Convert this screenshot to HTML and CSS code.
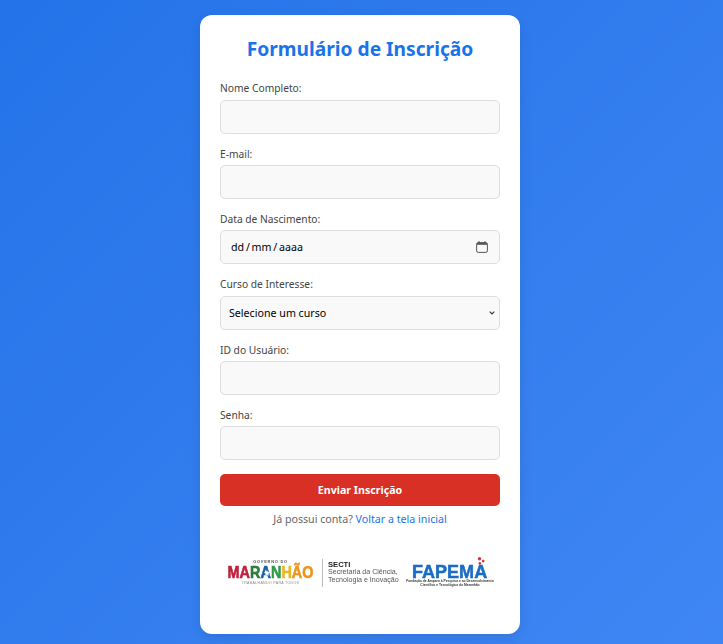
FILE: index.html
```html
<!DOCTYPE html>
<html lang="pt-BR">
<head>
  <meta charset="UTF-8" />
  <meta name="viewport" content="width=device-width, initial-scale=1" />
  <title>Formulário de Inscrição</title>
  <link rel="stylesheet" href="styles.css">
</head>
<body>
  <main class="card">
    <h1 class="card-title">Formulário de Inscrição</h1>

    <form class="form">
      <div class="field">
        <label class="field-label" for="nome">Nome Completo:</label>
        <input class="field-input" type="text" id="nome">
      </div>
      <div class="field">
        <label class="field-label" for="email">E-mail:</label>
        <input class="field-input" type="text" id="email">
      </div>
      <div class="field">
        <span class="field-label">Data de Nascimento:</span>
        <div class="field-input date-input">
          <span>dd / mm / aaaa</span>
          <svg class="date-icon" viewBox="0 0 12 12" width="12" height="12" aria-hidden="true">
            <path d="M3 0v2M9 0v2" fill="none" stroke="#555" stroke-width="1"/>
            <rect x="0.6" y="1.6" width="10.8" height="9.8" rx="1.6" fill="none" stroke="#555" stroke-width="1"/>
            <path d="M1 2h10v1.8H1z" fill="#555"/>
          </svg>
        </div>
      </div>
      <div class="field">
        <label class="field-label" for="curso">Curso de Interesse:</label>
        <select class="field-input field-select" id="curso">
          <option>Selecione um curso</option>
        </select>
      </div>
      <div class="field">
        <label class="field-label" for="usuario">ID do Usuário:</label>
        <input class="field-input" type="text" id="usuario">
      </div>
      <div class="field">
        <label class="field-label" for="senha">Senha:</label>
        <input class="field-input" type="password" id="senha">
      </div>
      <button class="submit-btn" type="button">Enviar Inscrição</button>
    </form>

    <p class="login-note">Já possui conta? <a href="#">Voltar a tela inicial</a></p>

    <div class="logos">
      <div class="logo-gov">
        <span class="gov-top">GOVERNO DO</span>
        <span class="gov-name"><span class="c-red">MA</span><span class="c-green">R</span><span class="c-blue">A</span><span class="c-lime">N</span><span class="c-yellow">H</span><span class="c-orange">ÃO</span></span>
        <span class="gov-bottom">TRABALHANDO PARA TODOS</span>
        <svg class="gov-star" viewBox="0 0 8 8" width="6" height="6" aria-hidden="true">
          <path d="M4 0l1.2 2.7 2.8.3-2.1 1.9.6 2.9L4 6.3 1.5 7.8l.6-2.9L0 3l2.8-.3z" fill="#fff"/>
        </svg>
      </div>
      <div class="logo-secti">
        <strong>SECTI</strong>
        <span>Secretaria da Ciência,</span>
        <span>Tecnologia e Inovação</span>
      </div>
      <div class="logo-fapema">
        <svg class="fapema-dots" viewBox="0 0 8 8" width="8" height="8" aria-hidden="true">
          <circle cx="2.5" cy="1.8" r="1.7" fill="#d8323c"/>
          <circle cx="6.2" cy="4" r="1.3" fill="#d8323c"/>
          <circle cx="2.8" cy="6.4" r="1.3" fill="#d8323c"/>
        </svg>
        <span class="fapema-name">FAPEMA</span>
        <span class="fapema-sub">Fundação de Amparo à Pesquisa e ao Desenvolvimento</span>
        <span class="fapema-sub">Científico e Tecnológico do Maranhão</span>
      </div>
    </div>
  </main>
</body>
</html>
```

FILE: styles.css
```css
* {
  box-sizing: border-box;
  margin: 0;
  padding: 0;
}

html,
body {
  height: 100%;
}

body {
  font-family: 'Noto Sans', sans-serif;
  background: linear-gradient(135deg, #2473e8, #3f86f4);
  display: flex;
  justify-content: center;
  padding: 15px 3px 0 0;
  overflow: hidden;
}

.card {
  width: 320px;
  height: 619px;
  background: #fff;
  border-radius: 12px;
  padding: 20px;
  box-shadow: 0 4px 12px rgba(0, 0, 0, 0.1);
}

.card-title {
  font-size: 19.2px;
  line-height: 28px;
  font-weight: 700;
  color: #1a73e8;
  text-align: center;
  margin-bottom: 18.37px;
}

.form {
  display: flex;
  flex-direction: column;
  gap: 13px;
}

.field {
  display: flex;
  flex-direction: column;
  gap: 3px;
}

.field-label {
  font-size: 10.24px;
  line-height: 15.33px;
  color: #444;
}

.field-input {
  width: 100%;
  height: 34px;
  background: #f9f9f9;
  border: 1px solid #ddd;
  border-radius: 5px;
  padding: 0 8px;
  font-family: inherit;
  font-size: 10.67px;
  color: #000;
}

.field-select {
  appearance: none;
  background-image: url("data:image/svg+xml,%3Csvg xmlns='http://www.w3.org/2000/svg' width='6' height='4'%3E%3Cpath d='M.7.7 3 3l2.3-2.3' fill='none' stroke='%23333' stroke-width='1.1'/%3E%3C/svg%3E");
  background-repeat: no-repeat;
  background-position: right 4px center;
}

.date-input {
  display: flex;
  align-items: center;
  justify-content: space-between;
  padding: 0 11px 0 10px;
  word-spacing: -1px;
}

.date-icon {
  display: block;
}

.submit-btn {
  height: 32px;
  margin-top: 0.5px;
  background: #d93025;
  color: #fff;
  border: none;
  border-radius: 5px;
  font-family: inherit;
  font-size: 10.67px;
  font-weight: 700;
  cursor: pointer;
}

.login-note {
  margin-top: 6px;
  font-size: 10.67px;
  line-height: 15px;
  text-align: center;
  color: #666;
}

.login-note a {
  color: #1a73e8;
  text-decoration: none;
}

.logos {
  display: flex;
  align-items: center;
  justify-content: center;
  height: 36px;
  margin-top: 28px;
  padding-left: 2px;
  filter: blur(0.3px);
}

.logo-gov {
  position: relative;
  flex: none;
  width: 85px;
  display: flex;
  flex-direction: column;
  align-items: center;
  font-family: 'Liberation Sans', sans-serif;
  white-space: nowrap;
}

.gov-top {
  font-size: 4px;
  line-height: 4.6px;
  font-weight: 700;
  letter-spacing: 0.7px;
  color: #555;
}

.gov-name {
  font-size: 17px;
  line-height: 16px;
  font-weight: 700;
  -webkit-text-stroke: 0.6px;
  transform: scaleX(0.85);
}

.gov-bottom {
  font-size: 3.6px;
  line-height: 5px;
  letter-spacing: 0.3px;
  color: #888;
}

.gov-star {
  position: absolute;
  top: 10px;
  left: 36px;
}

.c-red { color: #c1203b; }
.c-green { color: #2f7d3c; }
.c-blue { color: #1c5fa8; }
.c-lime { color: #2f9a4a; }
.c-yellow { color: #e9b620; }
.c-orange { color: #f0931c; }

.logo-secti {
  flex: none;
  width: 76px;
  height: 28px;
  margin-left: 9px;
  padding-left: 5px;
  border-left: 1px solid #bbb;
  display: flex;
  flex-direction: column;
  justify-content: center;
  font-family: 'Liberation Sans', sans-serif;
  font-size: 7.1px;
  line-height: 7.6px;
  color: #555;
  white-space: nowrap;
}

.logo-secti strong {
  font-size: 7.6px;
  line-height: 8px;
  color: #222;
}

.logo-fapema {
  position: relative;
  flex: none;
  width: 88px;
  margin-left: 8px;
  padding-top: 6px;
  display: flex;
  flex-direction: column;
  align-items: center;
  font-family: 'Liberation Sans', sans-serif;
  white-space: nowrap;
}

.fapema-name {
  font-size: 19px;
  line-height: 17px;
  font-weight: 700;
  -webkit-text-stroke: 0.5px;
  color: #1a6dc4;
  transform: scaleX(0.95);
}

.fapema-sub {
  font-size: 3.3px;
  line-height: 3.9px;
  font-weight: 700;
  color: #333;
}

.fapema-dots {
  position: absolute;
  top: 0;
  right: 9px;
}
```
